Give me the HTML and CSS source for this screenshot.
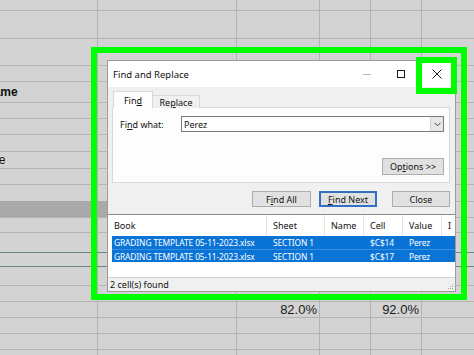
FILE: index.html
```html
<!DOCTYPE html>
<html>
<head>
<meta charset="utf-8">
<link rel="stylesheet" href="styles.css">
</head>
<body>
<div class="sheet">
  <div class="row h11"></div>
  <div class="row h28"></div>
  <div class="row h27"></div>
  <div class="row h16"></div>
  <div class="row h21"><div class="cell name">Name</div></div>
  <div class="row h16"></div>
  <div class="row h16"></div>
  <div class="row h17"></div>
  <div class="row h17"><div class="cell grade">Grade</div></div>
  <div class="row h16"></div>
  <div class="row h17"></div>
  <div class="row h16 band"><div class="cell dark"></div></div>
  <div class="row h15"></div>
  <div class="row h20 teal"></div>
  <div class="row h14 teal"></div>
  <div class="row h19"></div>
  <div class="row h16"></div>
  <div class="row h16"><div class="cell"></div><div class="cell"></div><div class="cell num">82.0%</div><div class="cell"></div><div class="cell num">92.0%</div></div>
  <div class="row h16"></div>
  <div class="row h16"></div>
  <div class="row h5"></div>
</div>

<div class="frame"></div>

<div class="dialog">
  <div class="titlebar">
    <span class="title">Find and Replace</span>
    <div class="controls">
      <div class="ctl"><span class="min"></span></div>
      <div class="ctl"><span class="max"></span></div>
      <div class="ctl ctl-close">
        <svg width="10" height="10" viewBox="0 0 10 10"><path d="M0.5 0.5L9.5 9.5M9.5 0.5L0.5 9.5" stroke="#1a1a1a" stroke-width="1" fill="none"/></svg>
      </div>
    </div>
  </div>
  <div class="tabs">
    <div class="tab active">Fin<u>d</u></div>
    <div class="tab">Re<u>p</u>lace</div>
  </div>
  <div class="panel">
    <div class="find-row">
      <span class="label">Fi<u>n</u>d what:</span>
      <div class="input">
        <span class="value">Perez</span>
        <span class="drop"><svg width="7" height="5" viewBox="0 0 7 5"><path d="M0.5 0.8L3.5 3.8L6.5 0.8" stroke="#444" stroke-width="1" fill="none"/></svg></span>
      </div>
    </div>
    <div class="opts-row">
      <div class="btn opts">Op<u>t</u>ions &gt;&gt;</div>
    </div>
  </div>
  <div class="actions">
    <div class="btn">F<u>i</u>nd All</div>
    <div class="btn primary"><u>F</u>ind Next</div>
    <div class="btn close">Close</div>
  </div>
  <div class="list">
    <div class="lhead">
      <div class="hc">Book</div>
      <div class="hc">Sheet</div>
      <div class="hc">Name</div>
      <div class="hc">Cell</div>
      <div class="hc">Value</div>
      <div class="hc">I</div>
    </div>
    <div class="lrow">
      <div class="rc">GRADING TEMPLATE 05-11-2023.xlsx</div>
      <div class="rc">SECTION 1</div>
      <div class="rc"></div>
      <div class="rc">$C$14</div>
      <div class="rc">Perez</div>
      <div class="rc"></div>
    </div>
    <div class="lrow second">
      <div class="rc">GRADING TEMPLATE 05-11-2023.xlsx</div>
      <div class="rc">SECTION 1</div>
      <div class="rc"></div>
      <div class="rc">$C$17</div>
      <div class="rc">Perez</div>
      <div class="rc"></div>
    </div>
  </div>
  <div class="status">
    <span>2 cell(s) found</span>
    <svg class="grip" width="7" height="7" viewBox="0 0 7 7"><g fill="#a8a8a8"><rect x="5" y="1" width="1" height="1"/><rect x="3" y="3" width="1" height="1"/><rect x="5" y="3" width="1" height="1"/><rect x="1" y="5" width="1" height="1"/><rect x="3" y="5" width="1" height="1"/><rect x="5" y="5" width="1" height="1"/></g></svg>
  </div>
</div>

<div class="close-hl"></div>
</body>
</html>
```

FILE: styles.css
```css
html, body {
  margin: 0;
  padding: 0;
}
body {
  width: 474px;
  height: 355px;
  overflow: hidden;
  position: relative;
  font-family: "Liberation Sans", Arial, sans-serif;
}

/* spreadsheet background */
.sheet {
  width: 474px;
  height: 355px;
  overflow: hidden;
  background-color: #d3d3d3;
  background-image:
    linear-gradient(#b3b3b3, #b3b3b3),
    linear-gradient(#b3b3b3, #b3b3b3),
    linear-gradient(#b3b3b3, #b3b3b3),
    linear-gradient(#b3b3b3, #b3b3b3),
    linear-gradient(#b3b3b3, #b3b3b3);
  background-size: 1px 100%;
  background-repeat: no-repeat;
  background-position: 97px 0, 236px 0, 319px 0, 370px 0, 421px 0;
}
.row {
  box-sizing: border-box;
  border-bottom: 1px solid #b4b4b4;
  display: grid;
  grid-template-columns: 97px 140px 83px 51px 51px 1fr;
}
.h5 { height: 5px; border-bottom: none; }
.h11 { height: 11px; }
.h14 { height: 14px; }
.h15 { height: 15px; }
.h16 { height: 16px; }
.h17 { height: 17px; }
.h19 { height: 19px; }
.h20 { height: 20px; }
.h21 { height: 21px; }
.h27 { height: 27px; }
.h28 { height: 28px; }
.teal { border-bottom-color: #6b8880; }
.cell {
  overflow: hidden;
  white-space: nowrap;
  font-size: 12px;
  color: #111;
  display: flex;
  align-items: center;
}
.name {
  font-weight: bold;
  text-indent: -15px;
  font-size: 12px;
}
.grade {
  text-indent: -28px;
}
.dark {
  grid-column: 1 / 3;
  background: #a9a9a9;
  margin-top: -1px;
}
.num {
  justify-content: flex-end;
  padding-right: 3px;
  font-size: 13px;
  color: #1a1a1a;
}

/* green highlight frames */
.frame {
  position: absolute;
  left: 91px;
  top: 47px;
  width: 376px;
  height: 253px;
  box-sizing: border-box;
  border: 6px solid #00ff00;
}
.close-hl {
  position: absolute;
  left: 416px;
  top: 57px;
  width: 41px;
  height: 37px;
  box-sizing: border-box;
  border: 6px solid #00ff00;
}

/* dialog */
.dialog {
  position: absolute;
  left: 107px;
  top: 60px;
  width: 349px;
  height: 232px;
  box-sizing: border-box;
  border: 1px solid #9c9c9c;
  background: #f0f0f0;
  display: flex;
  flex-direction: column;
  font-family: "Noto Sans", "Open Sans", sans-serif;
  font-size: 9px;
  color: #111;
}
u {
  text-decoration-thickness: 1px;
  text-underline-offset: 1px;
}
.titlebar {
  height: 26px;
  background: #fff;
  display: flex;
  align-items: center;
  padding-left: 5px;
  flex-shrink: 0;
}
.title {
  font-size: 9.5px;
}
.controls {
  margin-left: auto;
  display: flex;
  height: 100%;
}
.ctl {
  width: 34px;
  display: flex;
  align-items: center;
  justify-content: center;
}
.ctl-close {
  width: 37px;
}
.min {
  width: 8px;
  height: 1px;
  background: #b8b8b8;
}
.max {
  width: 8px;
  height: 8px;
  box-sizing: border-box;
  border: 1px solid #1a1a1a;
}

.tabs {
  display: flex;
  align-items: flex-end;
  margin-top: 4px;
  margin-left: 5px;
  height: 17px;
  margin-bottom: -1px;
  position: relative;
  z-index: 1;
  flex-shrink: 0;
}
.tab {
  box-sizing: border-box;
  height: 13px;
  width: 47px;
  border: 1px solid #d9d9d9;
  border-left: none;
  border-bottom: none;
  background: #f0f0f0;
  display: flex;
  align-items: center;
  justify-content: center;
}
.tab.active {
  height: 17px;
  width: 40px;
  border-left: 1px solid #d9d9d9;
  background: #fdfdfd;
  padding-top: 1px;
}

.panel {
  box-sizing: border-box;
  height: 76px;
  margin: 0 5px 0 4px;
  background: #fdfdfd;
  border: 1px solid #d9d9d9;
  flex-shrink: 0;
}
.find-row {
  display: flex;
  align-items: center;
  margin-top: 8px;
  padding-left: 7px;
}
.label {
  width: 61px;
}
.input {
  box-sizing: border-box;
  width: 263px;
  height: 16px;
  background: #fff;
  border: 1px solid #7a7a7a;
  display: flex;
  align-items: center;
  padding-left: 2px;
}
.value {
  flex: 1;
}
.drop {
  box-sizing: border-box;
  width: 13px;
  height: 14px;
  background: #e8e8e8;
  border-left: 1px solid #cfcfcf;
  display: flex;
  align-items: center;
  justify-content: center;
}
.opts-row {
  display: flex;
  justify-content: flex-end;
  margin-top: 26px;
  padding-right: 5px;
}
.btn {
  box-sizing: border-box;
  height: 16px;
  width: 59px;
  background: #e1e1e1;
  border: 1px solid #adadad;
  display: flex;
  align-items: center;
  justify-content: center;
}
.btn.opts {
  width: 62px;
  height: 17px;
}
.actions {
  display: flex;
  justify-content: flex-end;
  margin-top: 8px;
  padding-right: 5px;
  flex-shrink: 0;
}
.btn.primary {
  width: 58px;
  margin-left: 8px;
  border: 2px solid #2f72c4;
}
.btn.close {
  width: 58px;
  margin-left: 15px;
}

.list {
  margin-top: 7px;
  flex: 1;
  background: #fff;
  border-top: 1px solid #8a8a8a;
}
.lhead {
  display: grid;
  grid-template-columns: 159px 58px 39px 39px 39px 1fr;
  height: 21px;
}
.hc {
  display: flex;
  align-items: center;
  padding-left: 6px;
  border-right: 1px solid #e3e3e3;
  white-space: nowrap;
  overflow: hidden;
}
.hc:last-child {
  border-right: none;
}
.lrow {
  display: grid;
  grid-template-columns: 155px 58px 39px 39px 39px 1fr;
  height: 13px;
  margin-left: 4px;
  background: #0a74d6;
  color: #fff;
  font-size: 8.4px;
  letter-spacing: -0.1px;
}
.lrow.second {
  box-sizing: border-box;
  height: 13px;
  border-top: 1px solid #3b8fe0;
}
.rc {
  display: flex;
  align-items: center;
  padding-left: 2px;
  white-space: nowrap;
  overflow: hidden;
}
.lrow .rc:nth-child(n+2) {
  padding-left: 6px;
}

.status {
  box-sizing: border-box;
  height: 14px;
  border-top: 1px solid #d0d0d0;
  background: #f0f0f0;
  display: flex;
  align-items: center;
  padding-left: 2px;
  flex-shrink: 0;
}
.grip {
  margin-left: auto;
  margin-right: 1px;
  margin-top: 4px;
}
```
